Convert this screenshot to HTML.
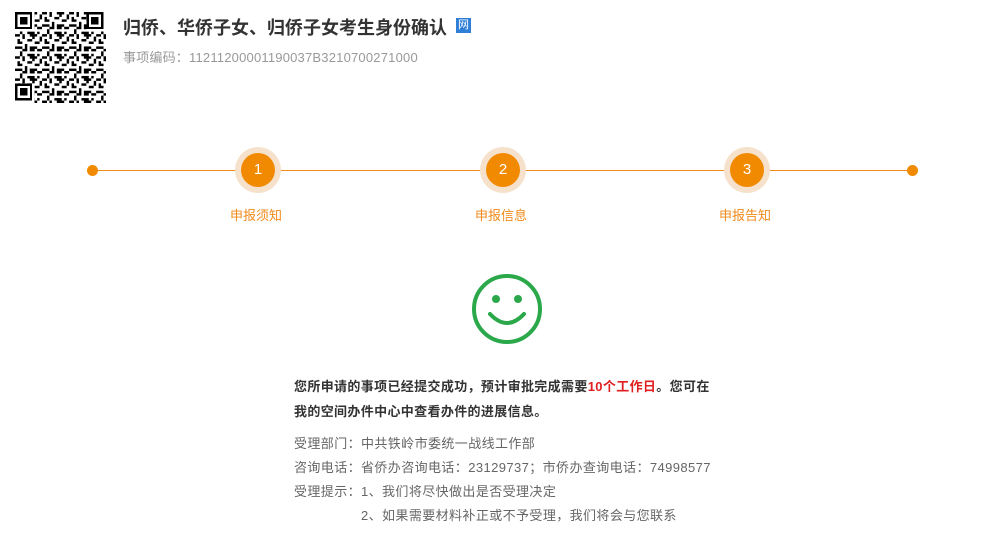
<!DOCTYPE html>
<html><head><meta charset="utf-8"><style>
body{margin:0;width:1000px;height:555px;background:#fff;font-family:"Liberation Sans","Noto Sans CJK SC",sans-serif;position:relative;overflow:hidden}
.a{position:absolute;white-space:nowrap}
</style></head><body>
<svg class="a" style="left:15px;top:12px" width="91" height="91" viewBox="0 0 37 37" shape-rendering="crispEdges">
<defs><pattern id="p" width="11" height="9" patternUnits="userSpaceOnUse">
<rect x="0" y="0" width="2" height="1"/><rect x="3" y="0" width="1" height="2"/><rect x="6" y="0" width="3" height="1"/><rect x="10" y="1" width="1" height="2"/>
<rect x="1" y="2" width="1" height="2"/><rect x="5" y="2" width="2" height="1"/><rect x="8" y="3" width="2" height="1"/><rect x="0" y="5" width="3" height="1"/>
<rect x="4" y="4" width="1" height="3"/><rect x="6" y="5" width="2" height="2"/><rect x="9" y="6" width="2" height="1"/><rect x="2" y="7" width="1" height="2"/>
<rect x="5" y="8" width="3" height="1"/><rect x="9" y="8" width="1" height="1"/><rect x="7" y="1" width="1" height="1"/><rect x="2" y="3" width="1" height="1"/><rect x="8" y="5" width="1" height="1"/><rect x="3" y="6" width="1" height="1"/></pattern></defs>
<rect width="37" height="37" fill="url(#p)"/>
<g fill="#fff"><rect width="8" height="8"/><rect x="29" width="8" height="8"/><rect y="29" width="8" height="8"/></g>
<g fill="none" stroke="#000"><rect x=".5" y=".5" width="6" height="6"/><rect x="29.5" y=".5" width="6" height="6"/><rect x=".5" y="29.5" width="6" height="6"/></g>
<rect x="2" y="2" width="3" height="3"/><rect x="31" y="2" width="3" height="3"/><rect x="2" y="31" width="3" height="3"/>
</svg>
<div class="a" style="left:123px;top:14px;font-size:18px;font-weight:bold;color:#333">归侨、华侨子女、归侨子女考生身份确认</div>
<div class="a" style="left:456px;top:18px;width:15px;height:15px;background:#2f7fd8;color:#fff;font-size:11px;line-height:15px;text-align:center">网</div>
<div class="a" style="left:123px;top:47px;font-size:13px;color:#999;letter-spacing:0.2px">事项编码：11211200001190037B3210700271000</div>
<div class="a" style="left:92px;top:170px;width:820px;height:1px;background:#f08a1c"></div>
<div class="a" style="left:87px;top:165px;width:11px;height:11px;border-radius:50%;background:#f08a00"></div>
<div class="a" style="left:907px;top:165px;width:11px;height:11px;border-radius:50%;background:#f08a00"></div>
<div class="a" style="left:235px;top:147px;width:46px;height:46px;border-radius:50%;background:#f6e2cc"></div>
<div class="a" style="left:480px;top:147px;width:46px;height:46px;border-radius:50%;background:#f6e2cc"></div>
<div class="a" style="left:724px;top:147px;width:46px;height:46px;border-radius:50%;background:#f6e2cc"></div>
<div class="a" style="left:241px;top:153px;width:34px;height:34px;border-radius:50%;background:#f18a00;color:#fff;font-size:15px;line-height:34px;text-align:center">1</div>
<div class="a" style="left:486px;top:153px;width:34px;height:34px;border-radius:50%;background:#f18a00;color:#fff;font-size:15px;line-height:34px;text-align:center">2</div>
<div class="a" style="left:730px;top:153px;width:34px;height:34px;border-radius:50%;background:#f18a00;color:#fff;font-size:15px;line-height:34px;text-align:center">3</div>
<div class="a" style="left:230px;top:205px;font-size:13px;color:#f08a1c">申报须知</div>
<div class="a" style="left:475px;top:205px;font-size:13px;color:#f08a1c">申报信息</div>
<div class="a" style="left:719px;top:205px;font-size:13px;color:#f08a1c">申报告知</div>
<svg class="a" style="left:470px;top:272px" width="74" height="74" viewBox="0 0 74 74"><g fill="none" stroke="#2aa84a" stroke-width="4"><circle cx="37" cy="37" r="33"/><path d="M20 42 Q37 60 54 42" stroke-linecap="round"/></g><circle cx="26" cy="27" r="4" fill="#2aa84a"/><circle cx="48" cy="27" r="4" fill="#2aa84a"/></svg>
<div class="a" style="left:294px;top:374px;font-size:13px;font-weight:bold;color:#333;line-height:25px;letter-spacing:0.35px">您所申请的事项已经提交成功，预计审批完成需要<span style="color:#e02020">10个工作日</span>。您可在<br>我的空间办件中心中查看办件的进展信息。</div>
<div class="a" style="left:294px;top:432px;font-size:13px;color:#666;line-height:24px;letter-spacing:0.4px">受理部门：中共铁岭市委统一战线工作部<br>咨询电话：省侨办咨询电话：23129737；市侨办查询电话：74998577<br>受理提示：1、我们将尽快做出是否受理决定<br><span style="padding-left:67px">2、如果需要材料补正或不予受理，我们将会与您联系</span></div>
</body></html>
